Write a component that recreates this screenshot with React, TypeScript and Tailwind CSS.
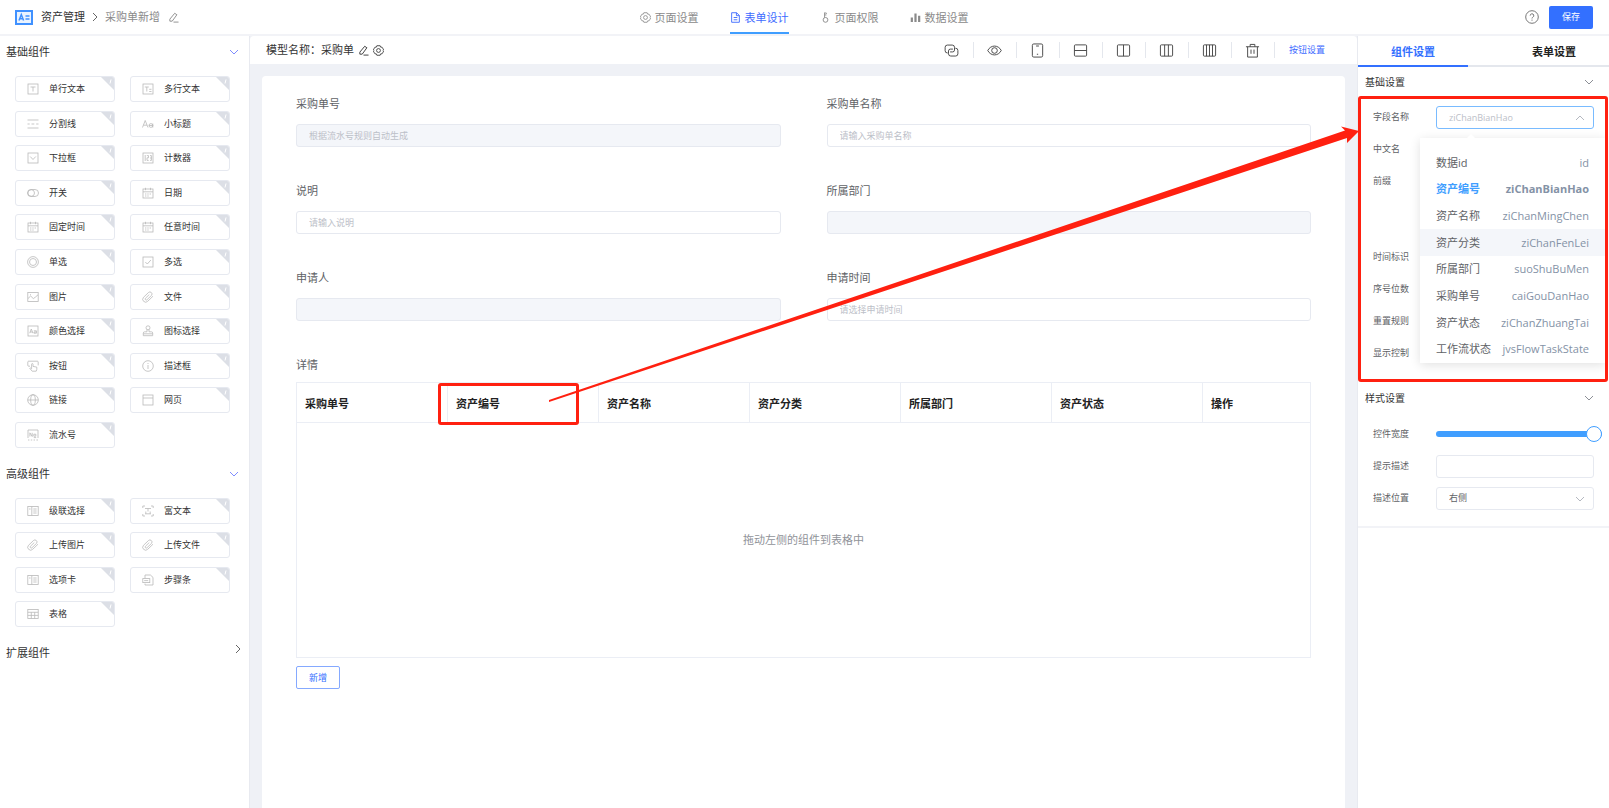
import { useState } from 'react';
import type { ReactNode } from 'react';

// 12x12 line icons of the component palette
const ICONS: Record<string, ReactNode> = {
  text: (
    <>
      <rect x="1" y="1" width="10" height="10" />
      <path d="M3.5 4h5M6 4v4.5" />
    </>
  ),
  textarea: (
    <>
      <rect x="1" y="1" width="10" height="10" />
      <path d="M2.8 4h4M4.8 4v4.5M7.2 6.3h2.3M7.2 8.5h2.3" />
    </>
  ),
  divider: <path d="M.5 2h11M.5 6h2.2M4.5 6h2.8M9.2 6h2.3M.5 10h11" />,
  heading: (
    <>
      <path d="M.5 9.5 3.2 2.5 6 9.5M1.5 7.2h3.4" />
      <circle cx="8.9" cy="7.5" r="1.9" />
      <path d="M7 7.5h3.9M10.8 5.6v3.9" />
    </>
  ),
  select: (
    <>
      <rect x="1" y="1" width="10" height="10" />
      <path d="m3.2 4.5 2.8 3 2.8-3" />
    </>
  ),
  number: (
    <>
      <rect x="1" y="1" width="10" height="10" />
      <path d="M3.2 3v6M4.8 3.6h1.7v2.2H5v2.6h1.7M8 3.6h1.4v4.8H8M8 6h1.4" />
    </>
  ),
  toggle: (
    <>
      <rect x=".5" y="2.5" width="11" height="7" rx="3.5" />
      <circle cx="4.2" cy="6" r="3.3" />
    </>
  ),
  calendar: (
    <>
      <rect x="1" y="2" width="10" height="9" />
      <path d="M1 4.8h10M3.5.8v2.4M8.5.8v2.4M3 7h1.4M5.3 7h1.4M7.6 7H9M3 9h1.4M5.3 9h1.4" />
    </>
  ),
  radio: (
    <>
      <circle cx="6" cy="6" r="5.4" />
      <circle cx="6" cy="6" r="3.5" className="fill-white" />
    </>
  ),
  checkbox: (
    <>
      <rect x="1" y="1" width="10" height="10" />
      <path d="m3.3 6 2 2 3.6-4" />
    </>
  ),
  image: (
    <>
      <rect x=".8" y="1.5" width="10.4" height="9" />
      <path d="M1 7.5 3.7 5l2.6 2.6 2-1.4 2.7-2.4M3 3.7h1" />
    </>
  ),
  clip: (
    <path d="m11 5.2-5.2 5a2.9 2.9 0 0 1-4.3-3.900l5-4.800a2.100 2.100 0 0 1 3.100 2.800L5 8.700a1 1 0 0 1-1.600-1.400l3.900-3.800" />
  ),
  color: (
    <>
      <rect x="1" y="1" width="10" height="10" />
      <path d="M2.7 8.2 4.3 4l1.6 4.2M3.2 7h2.2M6.8 5.8h2.6v2.4H7V7h2.4" />
    </>
  ),
  stamp: (
    <>
      <circle cx="6" cy="2.8" r="2" />
      <path d="M5 4.6v2.2H2.6a1.3 1.3 0 0 0-1.3 1.3v2.6h9.4V8.1a1.3 1.3 0 0 0-1.3-1.3H7V4.6M1.3 8.8h9.4" />
    </>
  ),
  press: (
    <>
      <path d="M3 6.2H1.6a.8.8 0 0 1-.8-.8V2c0-.5.3-.8.8-.8h8.800c.5 0 .8.3.8.8v3.4" />
      <path d="M4.600 8.800V4.200c0-.9 1.400-.9 1.400 0v2.200l3.800.7v2.400L9.200 11.200H5.200L2.800 8.400c.3-.7 1-.5 1.800.4" />
    </>
  ),
  info: (
    <>
      <circle cx="6" cy="6" r="5.3" />
      <path d="M6 5v4M6 3v1" />
    </>
  ),
  globe: (
    <>
      <circle cx="6" cy="6" r="5.3" />
      <ellipse cx="6" cy="6" rx="2.3" ry="5.3" />
      <path d="M.7 6h10.6" />
    </>
  ),
  page: (
    <>
      <rect x="1" y="1" width="10" height="10" />
      <path d="M1 4h10" />
    </>
  ),
  serial: (
    <>
      <path d="M1 9V1h10v8M1 11h1.4M3.8 11h1.4M6.6 11H8M9.4 11H11" />
      <path d="M2.9 7.5V3.8l2.3 3.7V3.8M6.8 5.2h2v2h-2zM6.8 8.6h2.4" />
    </>
  ),
  cascade: (
    <>
      <rect x=".8" y="1.5" width="10.4" height="9" />
      <path d="M4.8 1.5v9M2 4h1.6M6.3 4h3.3M6.3 6h3.3M6.3 8h3.3" />
    </>
  ),
  rich: (
    <>
      <path d="M.8 3V1H3M9 1h2.2v2M11.2 9v2H9M3 11H.8V9" />
      <path d="M3 3.5h6M6 3.5v3M3 8.8h6M3.8 6.5v2.2M8.2 6.5v2.2" />
    </>
  ),
  steps: (
    <>
      <path d="M3 4.2V1h5.4L11 3.4V11H3V9.6" />
      <rect x=".8" y="4.6" width="7" height="4" />
      <path d="M2.2 6.6h4" />
    </>
  ),
  table: (
    <>
      <rect x=".8" y="1.5" width="10.4" height="9" />
      <path d="M.8 4.3h10.4M.8 7.4h10.4M4.3 4.3v6.2M7.7 4.3v6.2" />
    </>
  ),
};

const BASIC = [
  ['text', '单行文本'],
  ['textarea', '多行文本'],
  ['divider', '分割线'],
  ['heading', '小标题'],
  ['select', '下拉框'],
  ['number', '计数器'],
  ['toggle', '开关'],
  ['calendar', '日期'],
  ['calendar', '固定时间'],
  ['calendar', '任意时间'],
  ['radio', '单选'],
  ['checkbox', '多选'],
  ['image', '图片'],
  ['clip', '文件'],
  ['color', '颜色选择'],
  ['stamp', '图标选择'],
  ['press', '按钮'],
  ['info', '描述框'],
  ['globe', '链接'],
  ['page', '网页'],
  ['serial', '流水号'],
];

const ADVANCED = [
  ['cascade', '级联选择'],
  ['rich', '富文本'],
  ['clip', '上传图片'],
  ['clip', '上传文件'],
  ['cascade', '选项卡'],
  ['steps', '步骤条'],
  ['table', '表格'],
];

const OPTIONS = [
  ['数据id', 'id'],
  ['资产编号', 'ziChanBianHao'],
  ['资产名称', 'ziChanMingChen'],
  ['资产分类', 'ziChanFenLei'],
  ['所属部门', 'suoShuBuMen'],
  ['采购单号', 'caiGouDanHao'],
  ['资产状态', 'ziChanZhuangTai'],
  ['工作流状态', 'jvsFlowTaskState'],
];

const COLUMNS = ['采购单号', '资产编号', '资产名称', '资产分类', '所属部门', '资产状态', '操作'];

const FIELDS = [
  { id: 'no', label: '采购单号', placeholder: '根据流水号规则自动生成', disabled: true },
  { id: 'name', label: '采购单名称', placeholder: '请输入采购单名称', disabled: false },
  { id: 'desc', label: '说明', placeholder: '请输入说明', disabled: false },
  { id: 'dept', label: '所属部门', placeholder: '', disabled: true },
  { id: 'applicant', label: '申请人', placeholder: '', disabled: true },
  { id: 'time', label: '申请时间', placeholder: '请选择申请时间', disabled: false },
];

function Chevron({ dir = 'down', className = '' }: { dir?: 'down' | 'up' | 'right'; className?: string }) {
  const d = { down: 'm1 3 4 4 4-4', up: 'm1 7 4-4 4 4', right: 'm3 1 4 4-4 4' }[dir];
  return (
    <svg viewBox="0 0 10 10" className={`size-[10px] fill-none stroke-current ${className}`}>
      <path d={d} />
    </svg>
  );
}

function Pencil({ className = '' }: { className?: string }) {
  return (
    <svg viewBox="0 0 12 12" className={`size-[11px] fill-none stroke-current ${className}`}>
      <path d="M7.3 1.4 9.7 3 4.6 10H2V7.8zM6 11h5.5" />
    </svg>
  );
}

function Gear() {
  return (
    <svg viewBox="0 0 12 12" className="size-[11px] fill-none stroke-current stroke-[0.9]">
      <path d="M4.2.8h3.6l.5 1.5 1.600.1L11.600 5.200 10.700 6l.9.8-1.700 2.800-1.600.1-.5 1.500H4.200l-.5-1.500-1.600-.1L.4 6.800 1.300 6l-.9-.8 1.700-2.800 1.600-.1z" />
      <circle cx="6" cy="6" r="2.1" />
    </svg>
  );
}

const TABS = [
  { label: '页面设置', icon: <Gear /> },
  {
    label: '表单设计',
    icon: (
      <svg viewBox="0 0 12 12" className="size-[11px] fill-none stroke-current">
        <path d="M1.8.8h5.4l3 3v7.4H1.8zM7 .8V4h3.2M4 6h4M4 8.5h4" />
      </svg>
    ),
  },
  {
    label: '页面权限',
    icon: (
      <svg viewBox="0 0 12 12" className="size-[11px] fill-none stroke-current">
        <circle cx="6" cy="8.6" r="2.6" />
        <path d="M5 6.2V.8l2.6.8M5 3.2h2" />
      </svg>
    ),
  },
  {
    label: '数据设置',
    icon: (
      <svg viewBox="0 0 12 12" className="size-[11px] fill-current">
        <path d="M.8 6h2.4v5H.8zM4.8 1.5h2.4V11H4.8zM8.8 4h2.4v7H8.8z" />
      </svg>
    ),
  },
];

// 16x16 toolbar glyphs
const TOOLS: { label: string; icon: ReactNode }[] = [
  {
    label: '关联',
    icon: (
      <path d="M4 10.6h-.4A2.4 2.4 0 0 1 1.2 8.2V4.6a2.4 2.4 0 0 1 2.4-2.4h5.2a2.4 2.4 0 0 1 2.4 2.4v2.9a2 2 0 0 1-2 2H6.5M12 5.6h.4A2.4 2.4 0 0 1 14.8 8v3.5a2.4 2.4 0 0 1-2.4 2.4H7.2a2.4 2.4 0 0 1-2.4-2.4v-3a2 2 0 0 1 2-2h2.7" />
    ),
  },
  {
    label: '预览',
    icon: (
      <>
        <path d="M.8 8C4 1.7 12 1.7 15.2 8 12 14.3 4 14.3.8 8z" />
        <circle cx="8" cy="8" r="3" />
      </>
    ),
  },
  {
    label: '移动端',
    icon: (
      <>
        <rect x="2.5" y="1" width="11" height="14" rx="1.5" />
        <path d="M6.5 3.2h3M7.3 12h1.4" />
      </>
    ),
  },
  {
    label: '上下布局',
    icon: (
      <>
        <rect x="1.5" y="2" width="13" height="12" rx="1" />
        <path d="M1.5 8h13" />
      </>
    ),
  },
  {
    label: '两列',
    icon: (
      <>
        <rect x="1.5" y="2" width="13" height="12" rx="1" />
        <path d="M8 2v12" />
      </>
    ),
  },
  {
    label: '三列',
    icon: (
      <>
        <rect x="1.5" y="2" width="13" height="12" rx="1" />
        <path d="M6 2v12M10 2v12" />
      </>
    ),
  },
  {
    label: '四列',
    icon: (
      <>
        <rect x="1.5" y="2" width="13" height="12" rx="1" />
        <path d="M4.8 2v12M8 2v12M11.2 2v12" />
      </>
    ),
  },
  {
    label: '清空',
    icon: <path d="M1 4h14M5.5 4V1.5h5V4M2.8 4v11h10.4V4M6.4 7v4.5M9.6 7v4.5" />,
  },
];

function Palette({ items, className }: { items: string[][]; className: string }) {
  return (
    <div className={`grid grid-cols-2 content-between gap-x-[15px] pl-[15px] pr-[19px] ${className}`}>
      {items.map(([icon, label]) => (
        <button
          key={label}
          className="relative flex h-[26px] items-center overflow-hidden rounded-[3px] border border-[#e6e9f0] bg-white pl-[11px] text-[#333]"
        >
          <svg viewBox="0 0 12 12" className="mr-[10px] size-[12px] fill-none stroke-[#b9b9b9] stroke-[0.8]">
            {ICONS[icon]}
          </svg>
          {label}
          <svg viewBox="0 0 13 13" className="absolute right-0 top-0 size-[13px]">
            <path d="M0 0h13v13z" className="fill-[#dcdfe6]" />
            <path d="M10 2.5 9 6.5" className="fill-none stroke-white" />
          </svg>
        </button>
      ))}
    </div>
  );
}

function SectionTitle({ label, className = '' }: { label: string; className?: string }) {
  return (
    <button className={`flex w-full items-center justify-between pl-[7px] pr-[15px] text-[10px] text-[#333] ${className}`}>
      {label}
      <Chevron className="text-[#8c8f96]" />
    </button>
  );
}

export default function App() {
  const [activeTab, setActiveTab] = useState('表单设计');
  const [selected, setSelected] = useState('ziChanBianHao');
  const [width, setWidth] = useState(100);

  return (
    <div className="relative flex min-h-screen flex-col overflow-hidden bg-white font-['Open_Sans','Noto_Sans_CJK_SC',sans-serif] text-[9px] leading-4">
      <header className="flex h-9 items-stretch justify-between border-b-2 border-[#f2f3f7] text-[11px] text-[#8a8a8a]">
        <div className="flex flex-1 items-center pl-[15px]">
          <svg viewBox="0 0 18 15" className="mr-2 h-[15px] w-[18px] fill-none stroke-[#4091ff]">
            <rect x="1" y="1" width="16" height="13" className="fill-[#eaf3ff] stroke-2" />
            <path d="m4 10.5 2.3-6 2.3 6M4.8 8.7h3M10.5 6h4M10.5 9h4" className="stroke-[1.5]" />
          </svg>
          <span className="text-[#333]">资产管理</span>
          <Chevron dir="right" className="mx-[5px] text-[#666]" />
          <span>采购单新增</span>
          <Pencil className="ml-2" />
        </div>
        <nav className="flex gap-[31px]">
          {TABS.map(({ label, icon }) => (
            <button
              key={label}
              onClick={() => setActiveTab(label)}
              className={[
                'flex items-center gap-1 border-b-2 pt-[3px]',
                activeTab === label ? 'border-[#409eff] text-[#3e6bff]' : 'border-transparent',
              ].join(' ')}
            >
              {icon}
              {label}
            </button>
          ))}
        </nav>
        <div className="flex flex-1 items-center justify-end gap-[10px] pr-4">
          <svg viewBox="0 0 14 14" className="size-[14px] fill-none stroke-[#777]">
            <circle cx="7" cy="7" r="6.3" />
            <path d="M5.2 5.6a1.8 1.8 0 1 1 2.6 1.6c-.5.3-.8.6-.8 1.3M7 9.6v1.1" />
          </svg>
          <button className="h-[23px] w-11 rounded-[2px] bg-[#3370ff] text-[9px] text-white">保存</button>
        </div>
      </header>

      <div className="flex flex-1">
        <aside className="w-[250px] shrink-0 border-r border-[#e8eaf0]">
          <button className="flex h-8 w-full items-center justify-between pl-[6px] pr-[10px] text-[11px] text-[#333]">
            基础组件
            <Chevron className="text-[#7f8cff]" />
          </button>
          <Palette items={BASIC} className="mt-2 min-h-[372px]" />
          <button className="mt-[10px] flex h-8 w-full items-center justify-between pl-[6px] pr-[10px] text-[11px] text-[#333]">
            高级组件
            <Chevron className="text-[#7f8cff]" />
          </button>
          <Palette items={ADVANCED} className="mt-2 min-h-[129px]" />
          <button className="mt-[10px] flex h-8 w-full items-center justify-between pl-[6px] pr-[6px] text-[11px] text-[#333]">
            扩展组件
            <Chevron dir="right" className="mb-2 text-[#666]" />
          </button>
        </aside>

        <main className="flex min-w-0 flex-1 flex-col bg-[#eff1f6]">
          <div className="flex h-7 items-center justify-between rounded-t-[4px] bg-white pl-4 pr-8">
            <div className="flex items-center text-[11px] text-[#333]">
              模型名称：采购单
              <Pencil className="ml-1" />
              <span className="ml-1">
                <Gear />
              </span>
            </div>
            <div className="flex items-center">
              {TOOLS.map(({ label, icon }) => (
                <button
                  key={label}
                  aria-label={label}
                  className="flex h-4 w-[43px] items-center justify-center border-r border-[#e4e7ed]"
                >
                  <svg viewBox="0 0 16 16" className="size-[15px] fill-none stroke-[#444]">
                    {icon}
                  </svg>
                </button>
              ))}
              <a href="#buttons" className="ml-[14px] text-[#3e6bff]">
                按钮设置
              </a>
            </div>
          </div>

          <form className="mx-3 mt-3 flex-1 rounded-t-[4px] bg-white px-[34px] pt-5">
            <div className="grid grid-cols-2 gap-x-[46px]">
              {FIELDS.map(({ id, label, placeholder, disabled }) => (
                <div key={id} className="h-[87px]">
                  <label htmlFor={id} className="block text-[11px] text-[#606266]">
                    {label}
                  </label>
                  <input
                    id={id}
                    type="text"
                    placeholder={placeholder}
                    disabled={disabled}
                    className="mt-3 block h-[23px] w-full rounded-[3px] border border-[#e6e9f0] px-3 placeholder:text-[#bcc0c8] disabled:bg-[#f4f6fa]"
                  />
                </div>
              ))}
            </div>

            <p className="text-[11px] text-[#606266]">详情</p>
            <table className="mt-[9px] w-full table-fixed border-collapse border border-[#ebeef5] text-[11px]">
              <thead>
                <tr>
                  {COLUMNS.map((col, i) => (
                    <th
                      key={col}
                      className={[
                        'h-[40px] border border-[#ebeef5] pl-2 pt-[3px] text-left font-bold text-[#222]',
                        i < COLUMNS.length - 1 ? 'w-[151px]' : '',
                      ].join(' ')}
                    >
                      {col}
                    </th>
                  ))}
                </tr>
              </thead>
              <tbody>
                <tr>
                  <td colSpan={COLUMNS.length} className="h-[235px] text-center text-[#909399]">
                    拖动左侧的组件到表格中
                  </td>
                </tr>
              </tbody>
            </table>
            <button
              type="button"
              className="mt-2 h-[23px] w-11 rounded-[2px] border border-[#85a9ff] text-[9px] text-[#3370ff]"
            >
              新增
            </button>
          </form>
        </main>

        <aside className="w-[252px] shrink-0 border-l border-[#e8eaf0] text-[#606266]">
          <div className="flex h-[31px] justify-between border-b-2 border-[#e4e7ed] text-[11px] font-bold">
            <button className="-mb-[2px] w-[110px] border-b-2 border-[#3370ff] pt-[3px] text-[#3370ff]">组件设置</button>
            <button className="w-[110px] pt-[3px] text-[#222]">表单设置</button>
          </div>

          <SectionTitle label="基础设置" className="h-[30px]" />
          <div className="mt-1 px-[15px]">
            <div className="flex h-8 items-center">
              <label htmlFor="field" className="w-[63px]">
                字段名称
              </label>
              <div className="relative flex-1">
                <input
                  id="field"
                  type="text"
                  role="combobox"
                  aria-expanded
                  aria-controls="field-options"
                  placeholder={selected}
                  className="block h-[23px] w-full rounded-[3px] border border-[#79bbff] pl-3 pr-6 placeholder:text-[#bcc0c8]"
                />
                <Chevron dir="up" className="absolute right-[9px] top-[7px] text-[#b4b8c0]" />
                <div className="absolute -left-4 top-[32px] z-10 w-[185px] bg-white pt-3 shadow-[0_2px_10px_rgba(0,0,0,0.12)]">
                  <svg viewBox="0 0 10 5" className="absolute -top-[4px] left-[46px] h-[5px] w-[10px]">
                    <path d="M0 5 5 0l5 5z" className="fill-white" />
                  </svg>
                  <ul id="field-options" role="listbox" className="flex min-h-[213px] flex-col text-[11px]">
                    {OPTIONS.map(([label, value], i) => (
                      <li
                        key={value}
                        role="option"
                        aria-selected={selected === value}
                        onClick={() => setSelected(value)}
                        className={[
                          'flex flex-1 cursor-pointer items-center justify-between px-4',
                          selected === value ? 'font-bold text-[#409eff]' : '',
                          i === 3 ? 'bg-[#f4f6fa]' : '',
                        ].join(' ')}
                      >
                        {label}
                        <span className="text-[#8492a6]">{value}</span>
                      </li>
                    ))}
                  </ul>
                </div>
              </div>
            </div>
            <div className="flex h-8 items-center">中文名</div>
            <div className="h-[76px] pt-2">前缀</div>
            <div className="flex h-8 items-center">时间标识</div>
            <div className="flex h-8 items-center">序号位数</div>
            <div className="flex h-8 items-center">重置规则</div>
            <div className="flex h-8 items-center">显示控制</div>
          </div>

          <SectionTitle label="样式设置" className="mt-[14px] h-[30px]" />
          <div className="border-b-2 border-[#f2f3f7] px-[15px] pb-3 pt-[5px]">
            <div className="flex h-8 items-center">
              <label htmlFor="width" className="w-[63px] shrink-0">
                控件宽度
              </label>
              <input
                id="width"
                type="range"
                value={width}
                onChange={(e) => setWidth(Number(e.target.value))}
                className="-mr-2 h-4 min-w-0 flex-1 appearance-none bg-transparent [&::-webkit-slider-runnable-track]:h-[6px] [&::-webkit-slider-runnable-track]:rounded-full [&::-webkit-slider-runnable-track]:bg-[#409eff] [&::-webkit-slider-thumb]:-mt-[5px] [&::-webkit-slider-thumb]:size-4 [&::-webkit-slider-thumb]:appearance-none [&::-webkit-slider-thumb]:rounded-full [&::-webkit-slider-thumb]:border [&::-webkit-slider-thumb]:border-[#409eff] [&::-webkit-slider-thumb]:bg-white"
              />
            </div>
            <div className="flex h-8 items-center">
              <label htmlFor="tip" className="w-[63px]">
                提示描述
              </label>
              <input id="tip" type="text" className="h-[23px] min-w-0 flex-1 rounded-[3px] border border-[#e6e9f0] px-3" />
            </div>
            <div className="flex h-8 items-center">
              <label htmlFor="tip-pos" className="w-[63px]">
                描述位置
              </label>
              <div className="relative flex-1">
                <select
                  id="tip-pos"
                  className="block h-[23px] w-full appearance-none rounded-[3px] border border-[#e6e9f0] pl-3 pr-6"
                >
                  <option>右侧</option>
                  <option>下方</option>
                </select>
                <Chevron className="pointer-events-none absolute right-[9px] top-[7px] text-[#b4b8c0]" />
              </div>
            </div>
          </div>
        </aside>
      </div>

      {/* red callout marks linking the table column to its settings */}
      <svg
        viewBox="0 0 1609 808"
        className="pointer-events-none absolute left-0 top-0 z-20 h-[808px] w-[1609px] fill-none stroke-[#ff2010] stroke-3"
      >
        <rect x="439.5" y="384.5" width="138" height="39" rx="1.5" />
        <rect x="1359.5" y="97.5" width="247" height="283" rx="1.5" />
        <path
          d="M549 400 1345 130.5 1341 126.5 1359 131 1347 143v-5L549 402z"
          className="fill-[#ff2010] stroke-none"
        />
      </svg>
    </div>
  );
}
